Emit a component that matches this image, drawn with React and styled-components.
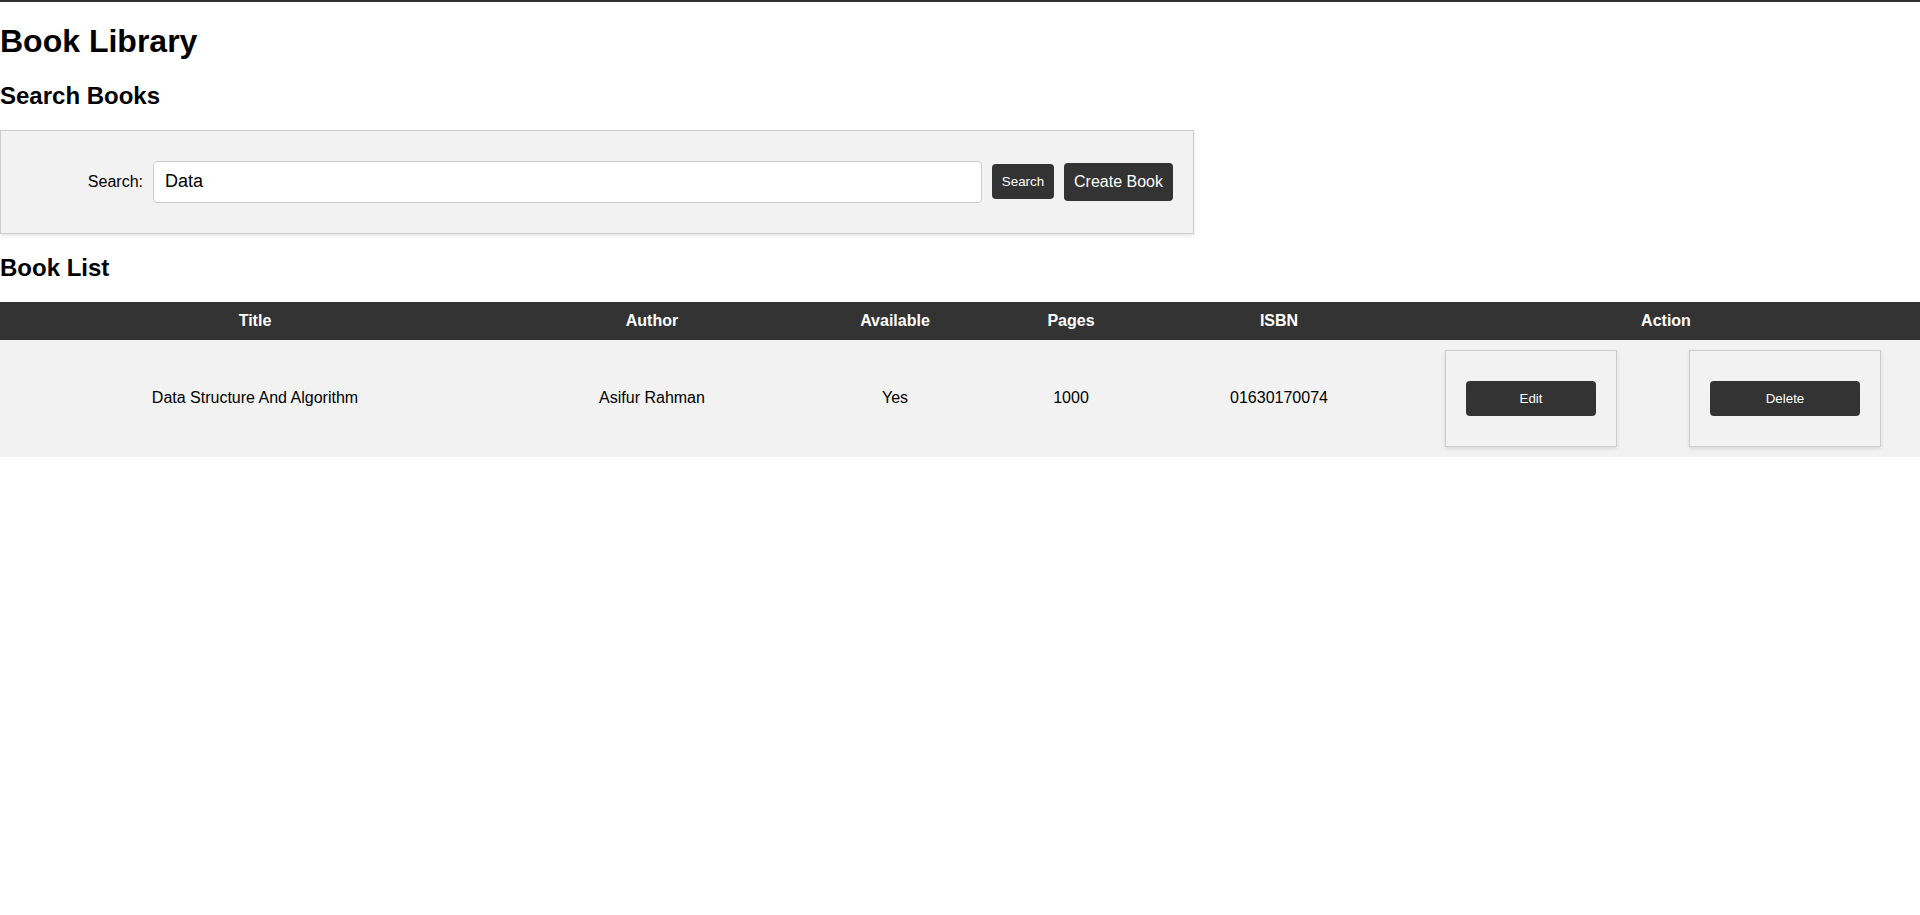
import React from "react";
import styled, { createGlobalStyle } from "styled-components";

const GlobalStyle = createGlobalStyle`
  html, body {
    margin: 0;
    padding: 0;
    background: #fff;
  }
  body {
    font-family: "Liberation Sans", Arial, sans-serif;
    color: #000;
  }
  * { box-sizing: border-box; }
`;

const Page = styled.div`
  border-top: 2px solid #333;
  min-height: 913px;
`;

const Title = styled.h1`
  font-size: 32px;
  font-weight: bold;
  margin: 21.44px 0;
`;

const SectionTitle = styled.h2`
  font-size: 24px;
  font-weight: bold;
  margin: 19.92px 0;
`;

const SearchPanel = styled.form`
  width: 1194px;
  display: flex;
  align-items: center;
  gap: 10px;
  padding: 30px 20px;
  background: #f2f2f2;
  border: 1px solid #ccc;
  box-shadow: 0 2px 4px rgba(0, 0, 0, 0.1);
`;

const Label = styled.label`
  width: 122px;
  text-align: right;
  font-size: 16px;
`;

const SearchInput = styled.input`
  flex: 1;
  height: 42px;
  padding: 0 11px;
  border: 1px solid #ccc;
  border-radius: 4px;
  background: #fff;
  font-family: "Liberation Sans", Arial, sans-serif;
  font-size: 18px;
  color: #000;
  outline: none;
`;

const DarkButton = styled.button`
  background: #333;
  color: #fff;
  border: none;
  border-radius: 4px;
  padding: 10px;
  font-family: "Liberation Sans", Arial, sans-serif;
  font-size: ${(p) => (p.$large ? "16px" : "13.333px")};
  line-height: normal;
  cursor: pointer;
  width: ${(p) => (p.$block ? "100%" : "auto")};
  display: block;
`;

const Table = styled.table`
  width: 100%;
  border-collapse: collapse;
  table-layout: fixed;
`;

const Th = styled.th`
  background: #333;
  color: #fff;
  font-weight: bold;
  font-size: 16px;
  padding: 10px;
  text-align: center;
`;

const Td = styled.td`
  background: #f2f2f2;
  font-size: 16px;
  padding: 10px;
  text-align: center;
  vertical-align: middle;
`;

const ActionBox = styled.form`
  width: ${(p) => p.$width}px;
  margin: 0 auto;
  padding: 30px 20px;
  border: 1px solid #ccc;
  background: #f2f2f2;
  box-shadow: 0 2px 4px rgba(0, 0, 0, 0.1);
`;

const columns = [510, 284, 202, 150, 266, 238, 270];

const books = [
  {
    title: "Data Structure And Algorithm",
    author: "Asifur Rahman",
    available: "Yes",
    pages: 1000,
    isbn: "01630170074",
  },
];

export default function App() {
  return (
    <Page>
      <GlobalStyle />
      <Title>Book Library</Title>
      <SectionTitle>Search Books</SectionTitle>
      <SearchPanel onSubmit={(e) => e.preventDefault()}>
        <Label htmlFor="search">Search:</Label>
        <SearchInput id="search" defaultValue="Data" />
        <DarkButton type="submit">Search</DarkButton>
        <DarkButton type="button" $large>
          Create Book
        </DarkButton>
      </SearchPanel>
      <SectionTitle>Book List</SectionTitle>
      <Table>
        <colgroup>
          {columns.map((w, i) => (
            <col key={i} style={{ width: w }} />
          ))}
        </colgroup>
        <thead>
          <tr>
            <Th>Title</Th>
            <Th>Author</Th>
            <Th>Available</Th>
            <Th>Pages</Th>
            <Th>ISBN</Th>
            <Th colSpan={2}>Action</Th>
          </tr>
        </thead>
        <tbody>
          {books.map((b) => (
            <tr key={b.isbn}>
              <Td>{b.title}</Td>
              <Td>{b.author}</Td>
              <Td>{b.available}</Td>
              <Td>{b.pages}</Td>
              <Td>{b.isbn}</Td>
              <Td>
                <ActionBox $width={172} onSubmit={(e) => e.preventDefault()}>
                  <DarkButton type="submit" $block>
                    Edit
                  </DarkButton>
                </ActionBox>
              </Td>
              <Td>
                <ActionBox $width={192} onSubmit={(e) => e.preventDefault()}>
                  <DarkButton type="submit" $block>
                    Delete
                  </DarkButton>
                </ActionBox>
              </Td>
            </tr>
          ))}
        </tbody>
      </Table>
    </Page>
  );
}
